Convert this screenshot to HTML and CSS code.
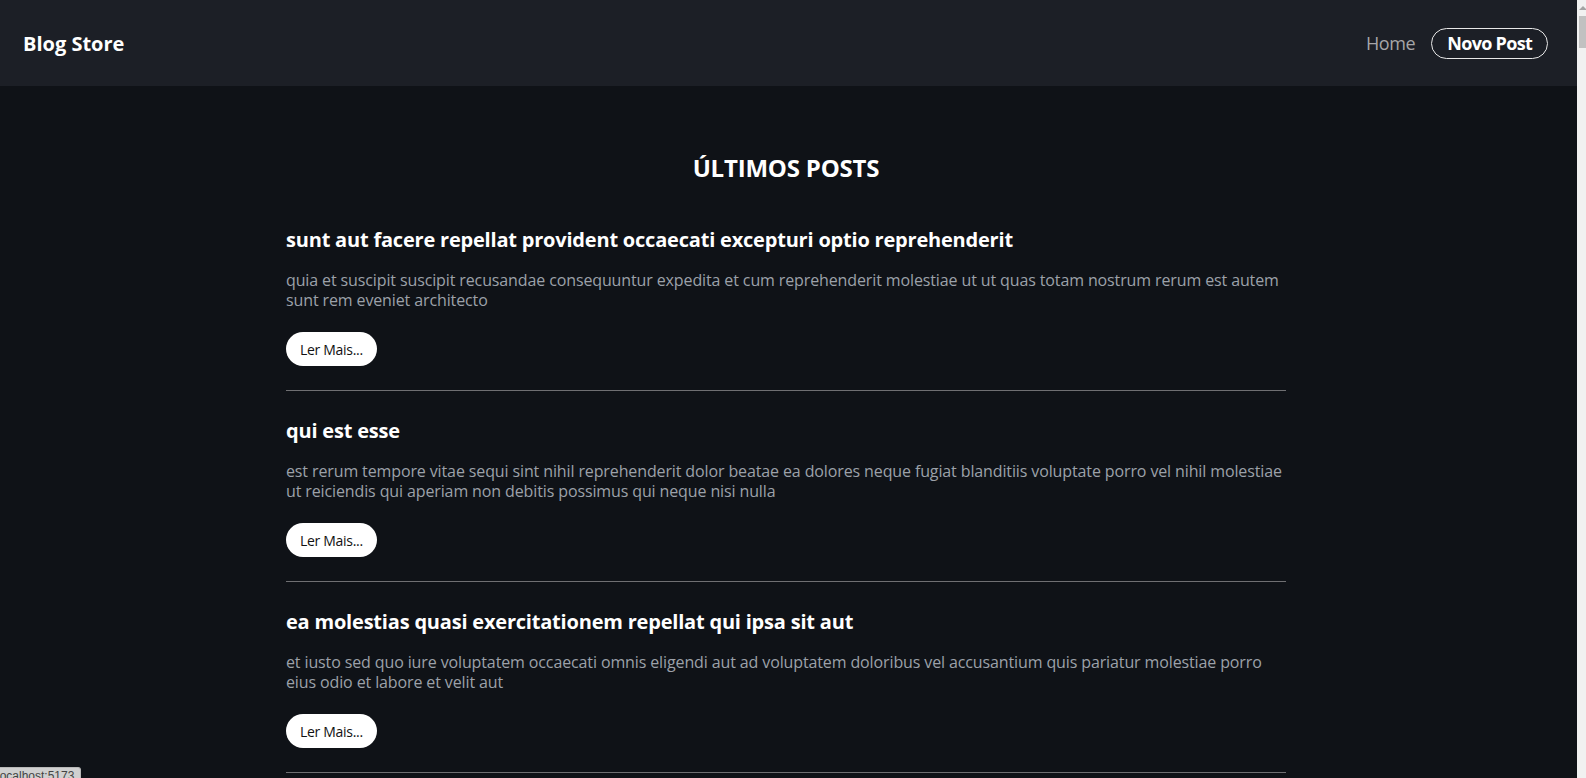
FILE: index.html
```html
<!DOCTYPE html>
<html lang="pt-BR">
<head>
<meta charset="utf-8">
<title>Blog Store</title>
<link rel="stylesheet" href="styles.css">
</head>
<body>
<header class="topbar">
  <a class="logo" href="#">Blog Store</a>
  <nav class="nav">
    <a class="nav-link" href="#">Home</a>
    <a class="nav-btn" href="#">Novo Post</a>
  </nav>
</header>
<main class="main">
  <h2 class="page-title">ÚLTIMOS POSTS</h2>
  <article class="post">
    <h3 class="post-title">sunt aut facere repellat provident occaecati excepturi optio reprehenderit</h3>
    <p class="post-body">quia et suscipit suscipit recusandae consequuntur expedita et cum reprehenderit molestiae ut ut quas totam nostrum rerum est autem sunt rem eveniet architecto</p>
    <a class="more-btn" href="#">Ler Mais...</a>
  </article>
  <article class="post">
    <h3 class="post-title">qui est esse</h3>
    <p class="post-body">est rerum tempore vitae sequi sint nihil reprehenderit dolor beatae ea dolores neque fugiat blanditiis voluptate porro vel nihil molestiae ut reiciendis qui aperiam non debitis possimus qui neque nisi nulla</p>
    <a class="more-btn" href="#">Ler Mais...</a>
  </article>
  <article class="post">
    <h3 class="post-title">ea molestias quasi exercitationem repellat qui ipsa sit aut</h3>
    <p class="post-body">et iusto sed quo iure voluptatem occaecati omnis eligendi aut ad voluptatem doloribus vel accusantium quis pariatur molestiae porro eius odio et labore et velit aut</p>
    <a class="more-btn" href="#">Ler Mais...</a>
  </article>
</main>
<div class="status">localhost:5173</div>
<div class="scrollbar"><span class="sb-arrow"></span><span class="sb-thumb"></span></div>
</body>
</html>
```
FILE: styles.css
```css
* { box-sizing: border-box; }
html, body { margin: 0; padding: 0; }
body {
  background: #0f1217;
  color: #ffffff;
  font-family: "Open Sans", "Noto Sans", sans-serif;
  padding-right: 14px;
  min-height: 800px;
}
a { text-decoration: none; }

.topbar {
  height: 86px;
  background: #1c1f26;
  display: flex;
  align-items: center;
  justify-content: space-between;
  margin-right: -14px;
  padding: 0 38px 0 23px;
}
.logo {
  color: #ffffff;
  font-size: 20px;
  font-weight: 700;
  letter-spacing: 0;
}
.nav {
  display: flex;
  align-items: center;
  gap: 16px;
}
.nav-link {
  color: #a6a6a8;
  font-size: 18px;
  letter-spacing: -0.4px;
}
.nav-btn {
  color: #ffffff;
  font-size: 18px;
  font-weight: 700;
  letter-spacing: -0.7px;
  height: 31px;
  display: flex;
  align-items: center;
  padding: 0 15px;
  border: 1px solid #e8e8e8;
  border-radius: 16px;
}

.main {
  max-width: 1000px;
  margin: 0 auto;
  padding-top: 66px;
}
.page-title {
  margin: 0 0 16px;
  text-align: center;
  font-size: 24px;
  line-height: 32px;
  font-weight: 700;
  letter-spacing: -0.2px;
}
.post {
  padding: 26px 0 24px;
  border-bottom: 1px solid #6f6f72;
}
.post-title {
  margin: 0 0 16px;
  font-size: 20px;
  line-height: 28px;
  font-weight: 700;
  letter-spacing: -0.2px;
}
.post-body {
  margin: 0 0 22px;
  font-size: 16px;
  line-height: 20px;
  color: #9ca1a9;
  letter-spacing: -0.12px;
}
.more-btn {
  display: inline-flex;
  align-items: center;
  height: 34px;
  padding: 0 14px;
  background: #ffffff;
  color: #111111;
  border-radius: 17px;
  font-size: 14px;
  letter-spacing: -0.3px;
}

.status {
  position: fixed;
  left: 0;
  bottom: -9px;
  height: 20px;
  width: 81px;
  padding: 1px 0 0 0;
  overflow: hidden;
  background: #d0d0d0;
  border: 1px solid #b8b8b8;
  border-left: none;
  border-radius: 0 3px 0 0;
  color: #444;
  font-family: "Liberation Sans", sans-serif;
  font-size: 12px;
  white-space: nowrap;
  text-indent: -3px;
}

.scrollbar {
  position: fixed;
  top: 0;
  right: 0;
  width: 9px;
  height: 100%;
  background: #f1f1f1;
}
.sb-arrow {
  position: absolute;
  top: 6px;
  left: 2px;
  width: 0;
  height: 0;
  border-left: 4px solid transparent;
  border-right: 4px solid transparent;
  border-bottom: 4px solid #a3a3a3;
}
.sb-thumb {
  position: absolute;
  top: 16px;
  left: 2px;
  width: 7px;
  height: 32px;
  background: #c1c1c1;
}
```
